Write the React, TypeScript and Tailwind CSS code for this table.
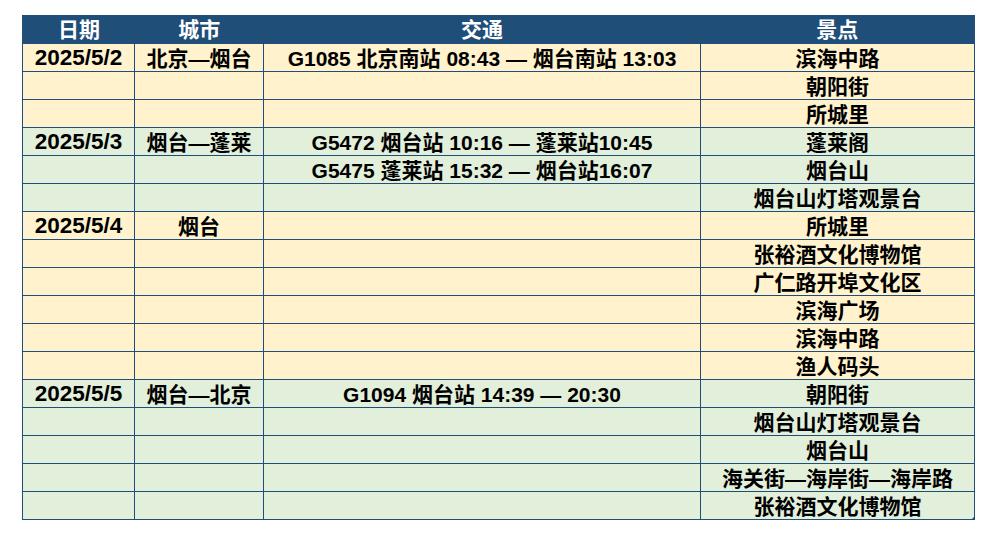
import React from "react";

type Row = { date?: string; city?: string; traffic?: string; spot: string; tone: "y" | "g" };

const rows: Row[] = [
  { date: "2025/5/2", city: "北京—烟台", traffic: "G1085 北京南站 08:43 — 烟台南站 13:03", spot: "滨海中路", tone: "y" },
  { spot: "朝阳街", tone: "y" },
  { spot: "所城里", tone: "y" },
  { date: "2025/5/3", city: "烟台—蓬莱", traffic: "G5472 烟台站 10:16 — 蓬莱站10:45", spot: "蓬莱阁", tone: "g" },
  { traffic: "G5475 蓬莱站 15:32 — 烟台站16:07", spot: "烟台山", tone: "g" },
  { spot: "烟台山灯塔观景台", tone: "g" },
  { date: "2025/5/4", city: "烟台", spot: "所城里", tone: "y" },
  { spot: "张裕酒文化博物馆", tone: "y" },
  { spot: "广仁路开埠文化区", tone: "y" },
  { spot: "滨海广场", tone: "y" },
  { spot: "滨海中路", tone: "y" },
  { spot: "渔人码头", tone: "y" },
  { date: "2025/5/5", city: "烟台—北京", traffic: "G1094 烟台站 14:39 — 20:30", spot: "朝阳街", tone: "g" },
  { spot: "烟台山灯塔观景台", tone: "g" },
  { spot: "烟台山", tone: "g" },
  { spot: "海关街—海岸街—海岸路", tone: "g" },
  { spot: "张裕酒文化博物馆", tone: "g" },
];

const font = { fontFamily: '"Liberation Sans", "Noto Sans CJK SC", sans-serif' };

export default function App() {
  return (
    <div className="w-[997px] h-[537px] bg-white pt-[15px] pl-[22px]" style={font}>
      <div className="relative w-[953px] border-x border-b border-[#1f4e79]">
        <div className="flex h-[28px] bg-[#1f4e79] text-white text-[21px] font-bold leading-none">
          <div className="w-[112px] flex items-center justify-center pt-[1px]">日期</div>
          <div className="w-[129px] flex items-center justify-center pt-[1px]">城市</div>
          <div className="w-[437px] flex items-center justify-center pt-[1px]">交通</div>
          <div className="w-[274px] flex items-center justify-center pt-[1px]">景点</div>
        </div>
        {rows.map((r, i) => (
          <div
            key={i}
            className={
              "flex h-[28px] border-t border-[#1f4e79] text-[21px] font-bold leading-none text-black " +
              (r.tone === "y" ? "bg-[#fff2cc]" : "bg-[#e2efda]")
            }
          >
            <div className="w-[112px] border-r border-[#1f4e79] flex items-center justify-center pt-[2px] text-[22.5px] whitespace-nowrap">{r.date}</div>
            <div className="w-[129px] border-r border-[#1f4e79] flex items-center justify-center pt-[2px] whitespace-nowrap">{r.city}</div>
            <div className="w-[437px] border-r border-[#1f4e79] flex items-center justify-center pt-[2px] whitespace-nowrap">{r.traffic}</div>
            <div className="w-[273px] flex items-center justify-center pt-[2px] whitespace-nowrap">{r.spot}</div>
          </div>
        ))}
        <div className="absolute right-[-1px] bottom-[-1px] w-0 h-0 border-l-[4px] border-l-transparent border-b-[4px] border-b-[#1f4e79]" />
      </div>
    </div>
  );
}
